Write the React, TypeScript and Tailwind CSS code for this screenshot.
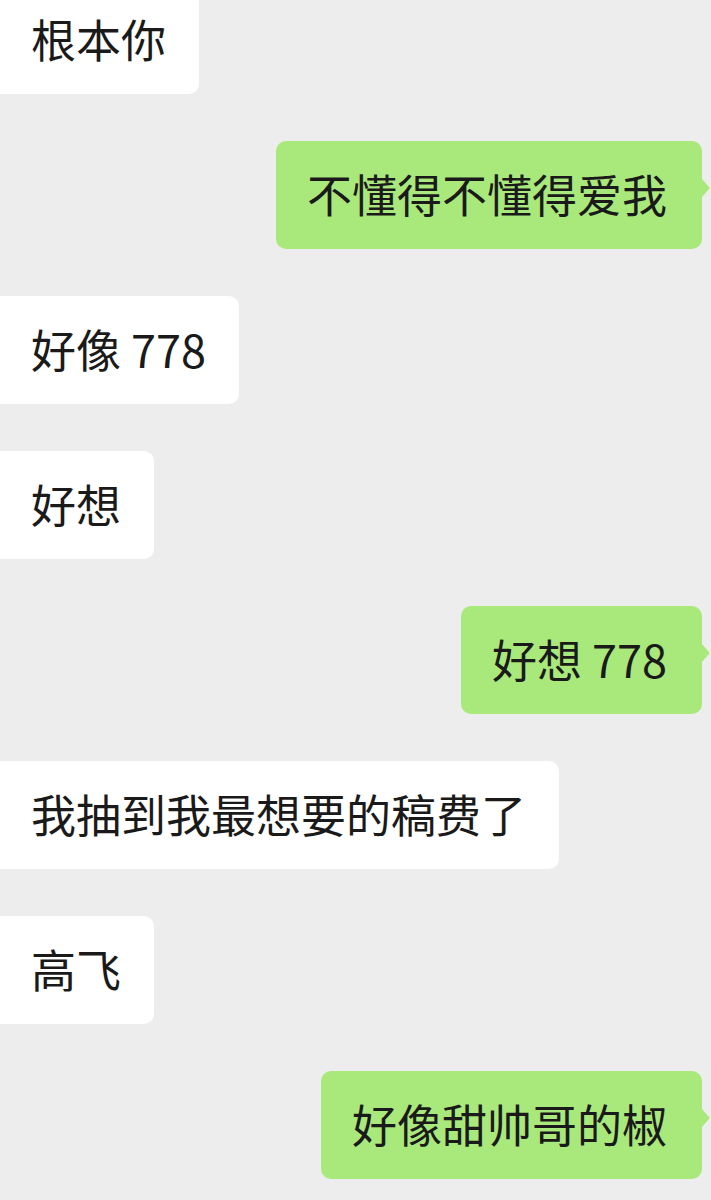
const messages: { text: string; mine: boolean }[] = [
  { text: '根本你', mine: false },
  { text: '不懂得不懂得爱我', mine: true },
  { text: '好像 778', mine: false },
  { text: '好想', mine: false },
  { text: '好想 778', mine: true },
  { text: '我抽到我最想要的稿费了', mine: false },
  { text: '高飞', mine: false },
  { text: '好像甜帅哥的椒', mine: true },
];

function Bubble({ text, mine }: { text: string; mine: boolean }) {
  return (
    <div className={mine ? 'flex justify-end pr-[9px]' : 'flex justify-start'}>
      <div
        className={
          mine
            ? 'relative h-[108px] rounded-[10px] bg-[#a9e97b] pl-[31px] pr-[35px] pb-[4px] flex items-center'
            : 'relative h-[108px] rounded-r-[10px] bg-white pl-[31px] pr-[33px] pb-[4px] flex items-center'
        }
      >
        <span className="text-[45px] leading-[63px] text-[#1a1a1a] whitespace-nowrap">{text}</span>
        {mine && (
          <svg className="absolute right-[-8px] top-[37px]" width="9" height="20" viewBox="0 0 9 20">
            <path d="M0 0 L8 9 Q9 10 8 11 L0 20 Z" fill="#a9e97b" />
          </svg>
        )}
      </div>
    </div>
  );
}

export default function App() {
  return (
    <div
      className="w-[711px] h-[1200px] overflow-hidden bg-[#ededed]"
      style={{ fontFamily: '"Noto Sans CJK SC", "Noto Sans", sans-serif' }}
    >
      <div className="flex flex-col gap-[47px] -mt-[14px]">
        {messages.map((m, i) => (
          <Bubble key={i} text={m.text} mine={m.mine} />
        ))}
      </div>
    </div>
  );
}
